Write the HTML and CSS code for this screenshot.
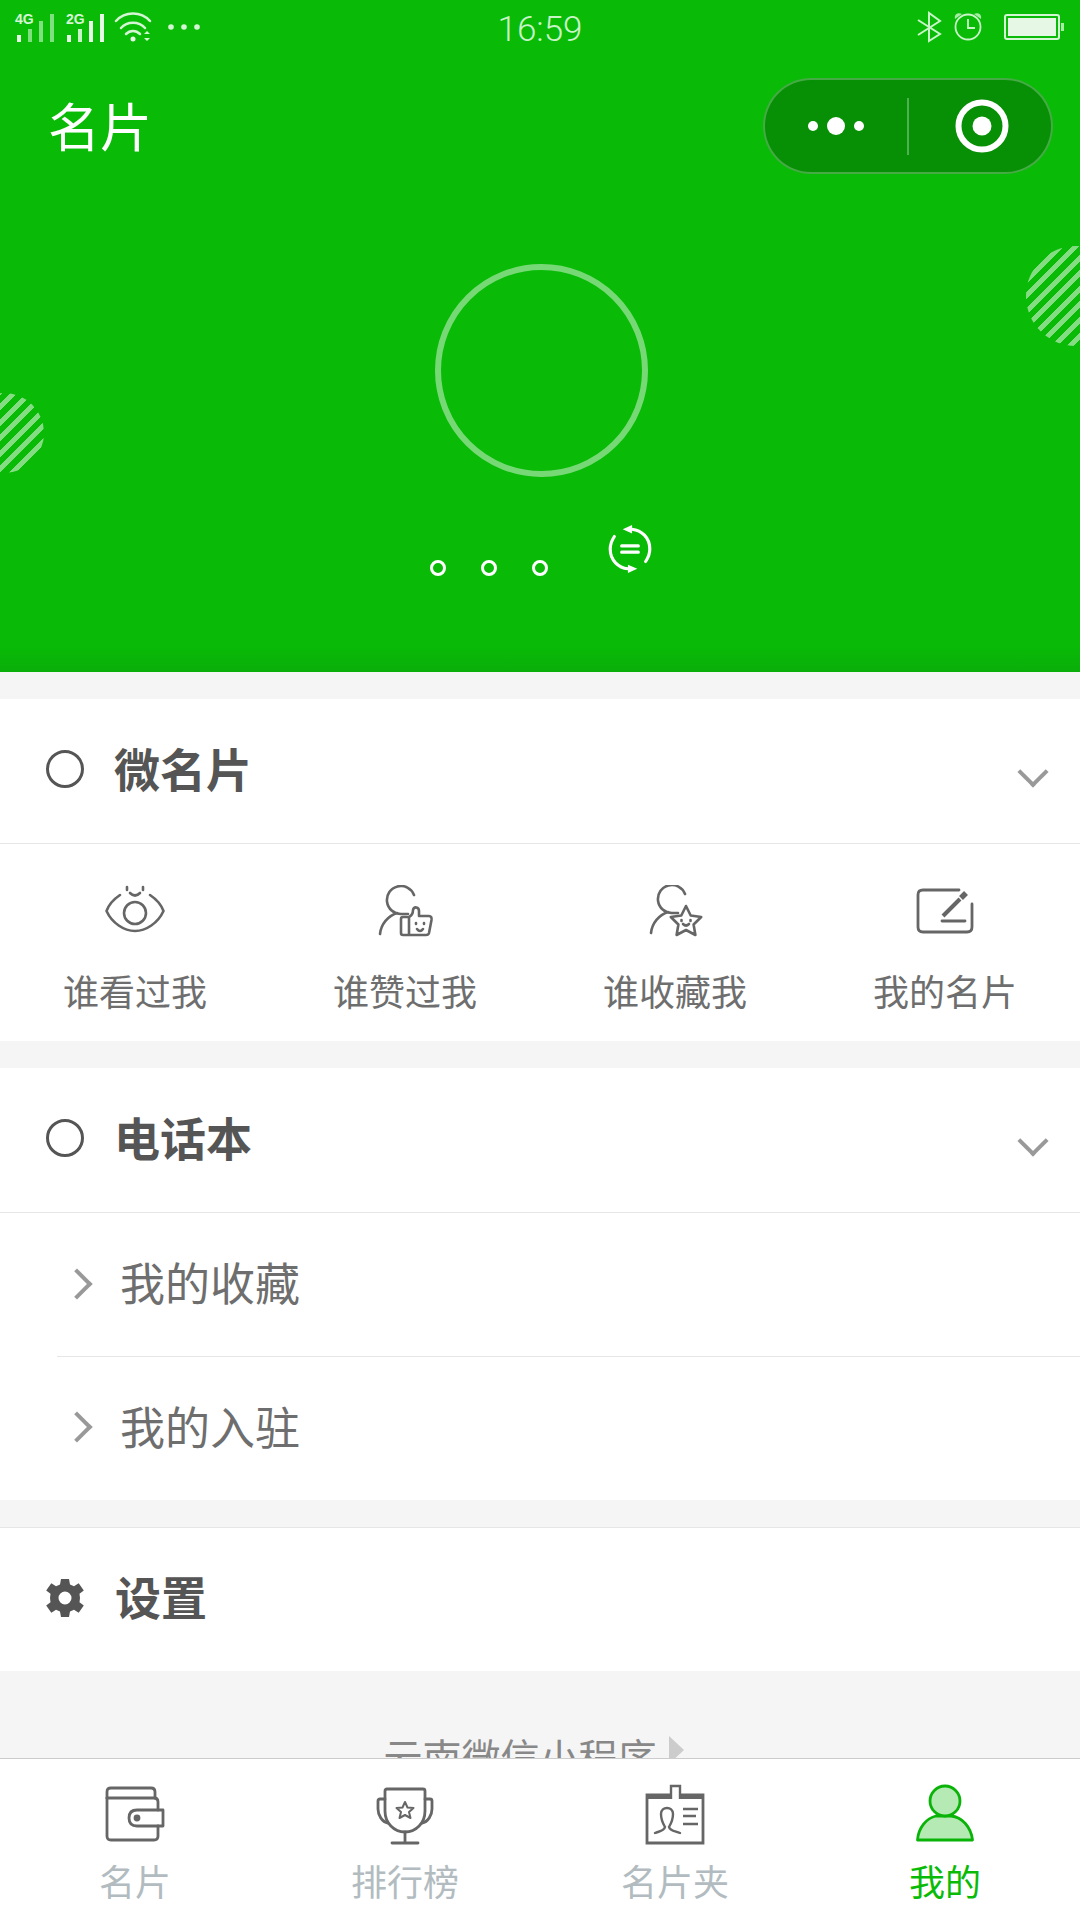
FILE: index.html
```html
<!DOCTYPE html>
<html lang="zh-CN">
<head>
    <meta charset="UTF-8">
    <meta name="viewport" content="width=device-width, initial-scale=1.0">
    <title>名片</title>
    <link rel="stylesheet" href="styles.css">
</head>
<body>
    <div class="app-container">
        <div class="hero">
            <div class="deco deco-left"></div>
            <div class="deco deco-right"></div>

            <div class="status-bar">
                <svg class="status-left" width="200" height="54" viewBox="0 0 200 54">
                    <text class="net-label" x="15" y="24">4G</text>
                    <rect x="17" y="35" width="4" height="7" fill="#e6fae6"/>
                    <rect x="28" y="29" width="4" height="13" fill="#7fe07e"/>
                    <rect x="39" y="21" width="4" height="21" fill="#7fe07e"/>
                    <rect x="50" y="14" width="4" height="28" fill="#7fe07e"/>
                    <text class="net-label" x="66" y="24">2G</text>
                    <rect x="67" y="35" width="4" height="7" fill="#e6fae6"/>
                    <rect x="78" y="29" width="4" height="13" fill="#c8f4c8"/>
                    <rect x="89" y="21" width="4" height="21" fill="#e6fae6"/>
                    <rect x="100" y="14" width="4" height="28" fill="#e6fae6"/>
                    <g fill="none" stroke="#d4f6d4" stroke-width="2.5" stroke-linecap="round">
                        <path d="M116 21C125 11 141 11 150 21"/>
                        <path d="M121 28C127 21 139 21 145 28"/>
                        <path d="M126 34C130 30 136 30 140 34"/>
                    </g>
                    <circle cx="133" cy="39" r="2.5" fill="#e6fae6"/>
                    <path d="M144 34l3-3 3 3zM144 38h6l-3 3z" fill="#d4f6d4"/>
                    <circle cx="171" cy="27" r="2.8" fill="#d4f6d4"/>
                    <circle cx="184" cy="27" r="2.8" fill="#d4f6d4"/>
                    <circle cx="197" cy="27" r="2.8" fill="#d4f6d4"/>
                </svg>
                <div class="status-time">16:59</div>
                <svg class="status-right" width="150" height="54" viewBox="916 0 150 54">
                    <path d="M918 20L940 34L929 41V13L940 21L918 35" fill="none" stroke="#c8f4c8" stroke-width="2"/>
                    <circle cx="968" cy="27" r="12.5" fill="none" stroke="#c8f4c8" stroke-width="1.8"/>
                    <path d="M968 19V28H975" fill="none" stroke="#c8f4c8" stroke-width="1.8"/>
                    <path d="M955 19C954 14 958 12 962 14zM981 19C982 14 978 12 974 14z" fill="#a6eca5"/>
                    <rect x="1005" y="15" width="54" height="24" rx="2" fill="none" stroke="#d4f6d4" stroke-width="2"/>
                    <rect x="1008" y="18" width="48" height="18" fill="#e6f7e6"/>
                    <rect x="1061" y="23" width="3" height="8" fill="#a6eca5"/>
                </svg>
            </div>

            <div class="nav-bar">
                <div class="nav-title">名片</div>
                <div class="capsule">
                    <div class="capsule-side capsule-menu">
                        <span class="dot"></span>
                        <span class="dot dot-big"></span>
                        <span class="dot"></span>
                    </div>
                    <div class="capsule-line"></div>
                    <div class="capsule-side capsule-ring">
                        <svg width="54" height="54" viewBox="0 0 54 54">
                            <circle cx="27" cy="27" r="23.5" fill="none" stroke="#fff" stroke-width="6"/>
                            <circle cx="27" cy="27" r="9.5" fill="#fff"/>
                        </svg>
                    </div>
                </div>
            </div>

            <div class="avatar"></div>

            <div class="pager">
                <span class="pager-dot"></span>
                <span class="pager-dot"></span>
                <span class="pager-dot"></span>
                <svg class="swap-icon" width="46" height="50" viewBox="0 0 44 48" fill="none" stroke="#fff" stroke-width="3" stroke-linecap="round">
                    <path d="M24 5C33 6 41 13 41 24C41 29 39 33 37 36"/>
                    <path d="M20 43C11 42 3 35 3 24C3 19 5 15 7 12"/>
                    <path d="M14 21H30M14 27H30"/>
                    <path d="M15 5L24 1V9Z" fill="#fff" stroke="none"/>
                    <path d="M29 43L20 47V39Z" fill="#fff" stroke="none"/>
                </svg>
            </div>
        </div>

        <div class="main">
            <div class="section">
                <div class="section-head">
                    <span class="head-circle"></span>
                    <span class="head-title">微名片</span>
                    <span class="arrow-down"></span>
                </div>
                <div class="grid-menu">
                    <div class="grid-item">
                        <svg class="grid-icon" width="64" height="56" viewBox="0 0 64 56" fill="none" stroke="#666" stroke-width="2.6" stroke-linecap="round" stroke-linejoin="round">
                            <path d="M17 10C11 14 6 19 3.500 26C9 38 21 46 32 46C43 46 55 38 60.500 26C58 19 53 14 47 10"/>
                            <circle cx="32" cy="28" r="11"/>
                            <path d="M24 2V5M40 2V5M27 8Q32 13 37 8"/>
                        </svg>
                        <div class="grid-label">谁看过我</div>
                    </div>
                    <div class="grid-item">
                        <svg class="grid-icon" width="64" height="56" viewBox="0 0 64 56" fill="none" stroke="#666" stroke-width="2.6" stroke-linecap="round" stroke-linejoin="round">
                            <path d="M41 10A14 14 0 1 0 28 29H35"/>
                            <path d="M7 49C8 39 15 31 24 28"/>
                            <path d="M34 32H30Q28 32 28 34V48Q28 50 30 50H53Q55.500 50 56 48L58.500 35Q59 31 56 31H46V26C46 22 41 21 40 25C40 26 40 30 36 32V50"/>
                            <path d="M44 44Q47 48 50 44"/>
                            <path d="M43 38V39M51 38V39"/>
                        </svg>
                        <div class="grid-label">谁赞过我</div>
                    </div>
                    <div class="grid-item">
                        <svg class="grid-icon" width="64" height="56" viewBox="0 0 64 56" fill="none" stroke="#666" stroke-width="2.6" stroke-linecap="round" stroke-linejoin="round">
                            <path d="M42 9A14 14 0 1 0 29 28H35"/>
                            <path d="M8 48C9 38 16 30 25 27"/>
                            <path d="M43 21L47.700 30.500L58.200 32L50.600 39.500L52.400 50L43 45L33.600 50L35.400 39.500L27.800 32L38.300 30.500Z"/>
                            <path d="M40 39Q43 42 46 39"/>
                            <path d="M38.500 35V36M47.500 35V36"/>
                        </svg>
                        <div class="grid-label">谁收藏我</div>
                    </div>
                    <div class="grid-item">
                        <svg class="grid-icon" width="64" height="56" viewBox="0 0 64 56" fill="none" stroke="#666" stroke-width="2.8" stroke-linecap="round" stroke-linejoin="round">
                            <path d="M46 5H10Q5 5 5 10V42Q5 47 10 47H54Q59 47 59 42V19"/>
                            <path d="M30 31L47 14" stroke-width="4" stroke-linecap="butt"/>
                            <path d="M48 13L53 8" stroke-width="5.500" stroke-linecap="butt"/>
                            <path d="M29 36H52"/>
                        </svg>
                        <div class="grid-label">我的名片</div>
                    </div>
                </div>
            </div>

            <div class="section">
                <div class="section-head">
                    <span class="head-circle"></span>
                    <span class="head-title">电话本</span>
                    <span class="arrow-down"></span>
                </div>
                <div class="list-row">
                    <span class="arrow-right"></span>
                    <span class="list-text">我的收藏</span>
                </div>
                <div class="list-row">
                    <span class="arrow-right"></span>
                    <span class="list-text">我的入驻</span>
                </div>
            </div>

            <div class="section section-line">
                <div class="section-head section-head-last">
                    <svg class="gear" width="40" height="40" viewBox="0 0 40 40">
                        <path fill="#555" fill-rule="evenodd" d="M16 1H24L25 6.500L29 8.300L33.700 5.200L38.800 12.500L34.500 15.800L35 20L34.500 24.200L38.800 27.500L33.700 34.800L29 31.700L25 33.500L24 39H16L15 33.500L11 31.700L6.300 34.800L1.200 27.500L5.500 24.200L5 20L5.500 15.800L1.200 12.500L6.300 5.200L11 8.300L15 6.500ZM20 13.500A6.500 6.500 0 1 0 20 26.500A6.500 6.500 0 1 0 20 13.500Z"/>
                    </svg>
                    <span class="head-title">设置</span>
                </div>
            </div>

            <div class="footer-link">
                <span>云南微信小程序</span>
                <span class="footer-arrow"></span>
            </div>
        </div>

        <div class="tab-bar">
            <div class="tab-item">
                <svg class="tab-icon" width="64" height="64" viewBox="0 0 64 64" fill="none" stroke="#666" stroke-width="2.8" stroke-linecap="round" stroke-linejoin="round">
                    <path d="M4 14V8Q4 4 8 4H48Q52 4 52 8V14"/>
                    <path d="M4 14H51Q55 14 55 18V26"/>
                    <path d="M55 42V52Q55 56 51 56H8Q4 56 4 52V14"/>
                    <path d="M60 26H34Q26 26 26 34Q26 42 34 42H60Z"/>
                    <circle cx="34" cy="34" r="2" fill="#666"/>
                </svg>
                <div class="tab-label">名片</div>
            </div>
            <div class="tab-item">
                <svg class="tab-icon" width="64" height="64" viewBox="0 3 64 64" fill="none" stroke="#666" stroke-width="2.8" stroke-linecap="round" stroke-linejoin="round">
                    <path d="M14 8H50Q52 8 52 10V30C52 42 43 51 32 51C21 51 12 42 12 30V10Q12 8 14 8Z"/>
                    <path d="M12 18H7Q5 18 5 20V28C5 34 9 41 15 42"/>
                    <path d="M52 18H57Q59 18 59 20V28C59 34 55 41 49 42"/>
                    <path d="M32 51V62M19 62H45"/>
                    <path d="M32 21L34.500 26.500L40.500 27L36 31L37.500 37L32 34L26.500 37L28 31L23.500 27L29.500 26.500Z" stroke-width="2"/>
                </svg>
                <div class="tab-label">排行榜</div>
            </div>
            <div class="tab-item">
                <svg class="tab-icon" width="64" height="64" viewBox="0 3 64 64" fill="none" stroke="#666" stroke-width="2.4">
                    <path d="M4 62V14H60V62Z" stroke-width="2.800"/>
                    <path d="M4 16H60" stroke-width="4"/>
                    <path d="M28 18V5H37V18" fill="#fff"/>
                    <path d="M12 52C17 50 21 50 22 46C19 41 18 37 18 33C18 29 21 27 24 27C27 27 30 29 30 33C30 37 29 41 26 46C27 50 32 50 37 52" stroke-linecap="round"/>
                    <path d="M40 28H55M40 35H53M40 43H55"/>
                </svg>
                <div class="tab-label">名片夹</div>
            </div>
            <div class="tab-item tab-active">
                <svg class="tab-icon" width="64" height="64" viewBox="0 0 64 64" fill="#b6eab4" stroke="#09b308" stroke-width="2.8" stroke-linejoin="round">
                    <path d="M4.500 56C5.500 43 14 34 23 32H38C49 33 58 43 59.500 56Z"/>
                    <circle cx="32" cy="17" r="15"/>
                </svg>
                <div class="tab-label">我的</div>
            </div>
        </div>
    </div>
</body>
</html>
```

FILE: styles.css
```css
:root {
    --green: #09bb07;
    --page-bg: #f5f5f5;
    --line: #e6e6e6;
    --title-color: #555;
    --text-color: #6e6e6e;
}

body {
    margin: 0;
    font-family: "Noto Sans CJK SC", "Noto Sans", sans-serif;
    background-color: var(--page-bg);
}

.app-container {
    width: 1080px;
    height: 1920px;
    display: flex;
    flex-direction: column;
    overflow: hidden;
}

/* top green block */
.hero {
    position: relative;
    height: 672px;
    flex-shrink: 0;
    overflow: hidden;
    background: linear-gradient(var(--green) 645px, #0aae09);
}

.deco {
    position: absolute;
    border-radius: 50%;
    background: repeating-linear-gradient(135deg, rgba(255, 255, 255, 0.5) 0, rgba(255, 255, 255, 0.5) 5px, transparent 5px, transparent 11px);
}

.deco-left {
    left: -36px;
    top: 393px;
    width: 80px;
    height: 80px;
}

.deco-right {
    left: 1026px;
    top: 246px;
    width: 100px;
    height: 100px;
}

.status-bar {
    height: 54px;
    display: grid;
    grid-template-columns: 1fr auto 1fr;
    align-items: center;
}

.status-left {
    display: block;
}

.status-right {
    display: block;
    justify-self: end;
    margin-right: 14px;
}

.status-time {
    font-family: Roboto, sans-serif;
    font-weight: 300;
    font-size: 35px;
    color: #c8f4c8;
    margin-top: 4px;
}

.nav-bar {
    display: flex;
    justify-content: space-between;
    align-items: center;
    padding: 24px 27px 0 48px;
}

.nav-title {
    font-size: 52px;
    line-height: 95px;
    margin-top: -4px;
    color: #fff;
}

.capsule {
    box-sizing: border-box;
    width: 290px;
    height: 96px;
    display: flex;
    align-items: center;
    background-color: #078f06;
    border: 2px solid rgba(255, 255, 255, 0.25);
    border-radius: 48px;
}

.capsule-side {
    display: flex;
    justify-content: center;
    align-items: center;
    gap: 9px;
}

.capsule-menu {
    width: 142px;
}

.capsule-ring {
    flex: 1;
    padding-left: 4px;
}

.capsule-line {
    width: 2px;
    height: 57px;
    background-color: rgba(255, 255, 255, 0.3);
}

.dot {
    width: 10px;
    height: 10px;
    border-radius: 50%;
    background-color: #fff;
}

.dot-big {
    width: 18px;
    height: 18px;
}

.avatar {
    box-sizing: border-box;
    width: 213px;
    height: 213px;
    margin: 90px 0 0 435px;
    border: 6px solid rgba(255, 255, 255, 0.45);
    border-radius: 50%;
}

.pager {
    display: flex;
    justify-content: center;
    align-items: flex-start;
    gap: 35px;
    margin-top: 47px;
    padding-left: 2px;
}

.pager-dot {
    box-sizing: border-box;
    width: 16px;
    height: 16px;
    margin-top: 36px;
    border: 3px solid #fff;
    border-radius: 50%;
}

.swap-icon {
    display: block;
    margin-left: 24px;
}

.net-label {
    font-family: "Liberation Sans", sans-serif;
    font-weight: bold;
    font-size: 14px;
    fill: #d4f6d4;
}

/* sections */
.main {
    flex: 1;
    min-height: 0;
    overflow: hidden;
}

.section {
    margin-top: 27px;
    background-color: #fff;
}

.section-line {
    border-top: 1px solid var(--line);
}

.section-head {
    box-sizing: border-box;
    position: relative;
    height: 145px;
    display: flex;
    align-items: center;
    padding: 0 0 4px 46px;
    border-bottom: 1px solid var(--line);
}

.section-head-last {
    height: 143px;
    border-bottom: none;
    padding-left: 45px;
}

.head-circle {
    box-sizing: border-box;
    width: 38px;
    height: 38px;
    border: 3px solid var(--title-color);
    border-radius: 50%;
}

.gear {
    display: block;
}

.head-title {
    margin: -5px 0 0 30px;
    font-size: 46px;
    font-weight: bold;
    color: var(--title-color);
}

.arrow-down {
    position: absolute;
    right: 36px;
    top: 62px;
    width: 18px;
    height: 18px;
    border-right: 4px solid #999;
    border-bottom: 4px solid #999;
    transform: rotate(45deg);
}

.grid-menu {
    display: grid;
    grid-template-columns: repeat(4, 1fr);
    height: 197px;
}

.grid-item {
    display: flex;
    flex-direction: column;
    align-items: center;
    padding-top: 41px;
}

.grid-icon {
    display: block;
}

.grid-label {
    margin-top: 25px;
    font-size: 36px;
    line-height: 48px;
    color: var(--text-color);
}

.list-row {
    position: relative;
    height: 143px;
    display: flex;
    align-items: center;
    padding-left: 120px;
}

.list-row + .list-row {
    height: 144px;
}

.list-row + .list-row::before {
    content: "";
    position: absolute;
    left: 57px;
    right: 0;
    top: 0;
    height: 1px;
    background-color: var(--line);
}

.arrow-right {
    position: absolute;
    left: 66px;
    top: 50%;
    width: 18px;
    height: 18px;
    margin-top: -12px;
    border-top: 4px solid #999;
    border-right: 4px solid #999;
    transform: rotate(45deg);
}

.list-text {
    margin-top: -6px;
    font-size: 45px;
    color: var(--text-color);
}

.footer-link {
    display: flex;
    justify-content: center;
    align-items: flex-start;
    gap: 12px;
    padding: 56px 13px 0 0;
    font-size: 39px;
    line-height: 56px;
    color: #888;
}

.footer-arrow {
    width: 0;
    height: 0;
    margin-top: 9px;
    border-left: 15px solid #ccc;
    border-top: 14px solid transparent;
    border-bottom: 14px solid transparent;
}

/* bottom tabs */
.tab-bar {
    height: 161px;
    flex-shrink: 0;
    display: grid;
    grid-template-columns: repeat(4, 1fr);
    background-color: #fff;
    border-top: 1px solid #ccc;
}

.tab-item {
    display: flex;
    flex-direction: column;
    align-items: center;
    padding-top: 25px;
}

.tab-icon {
    display: block;
}

.tab-label {
    margin-top: 7px;
    font-size: 36px;
    line-height: 50px;
    color: #b2bcc0;
}

.tab-active .tab-label {
    color: var(--green);
}
```
